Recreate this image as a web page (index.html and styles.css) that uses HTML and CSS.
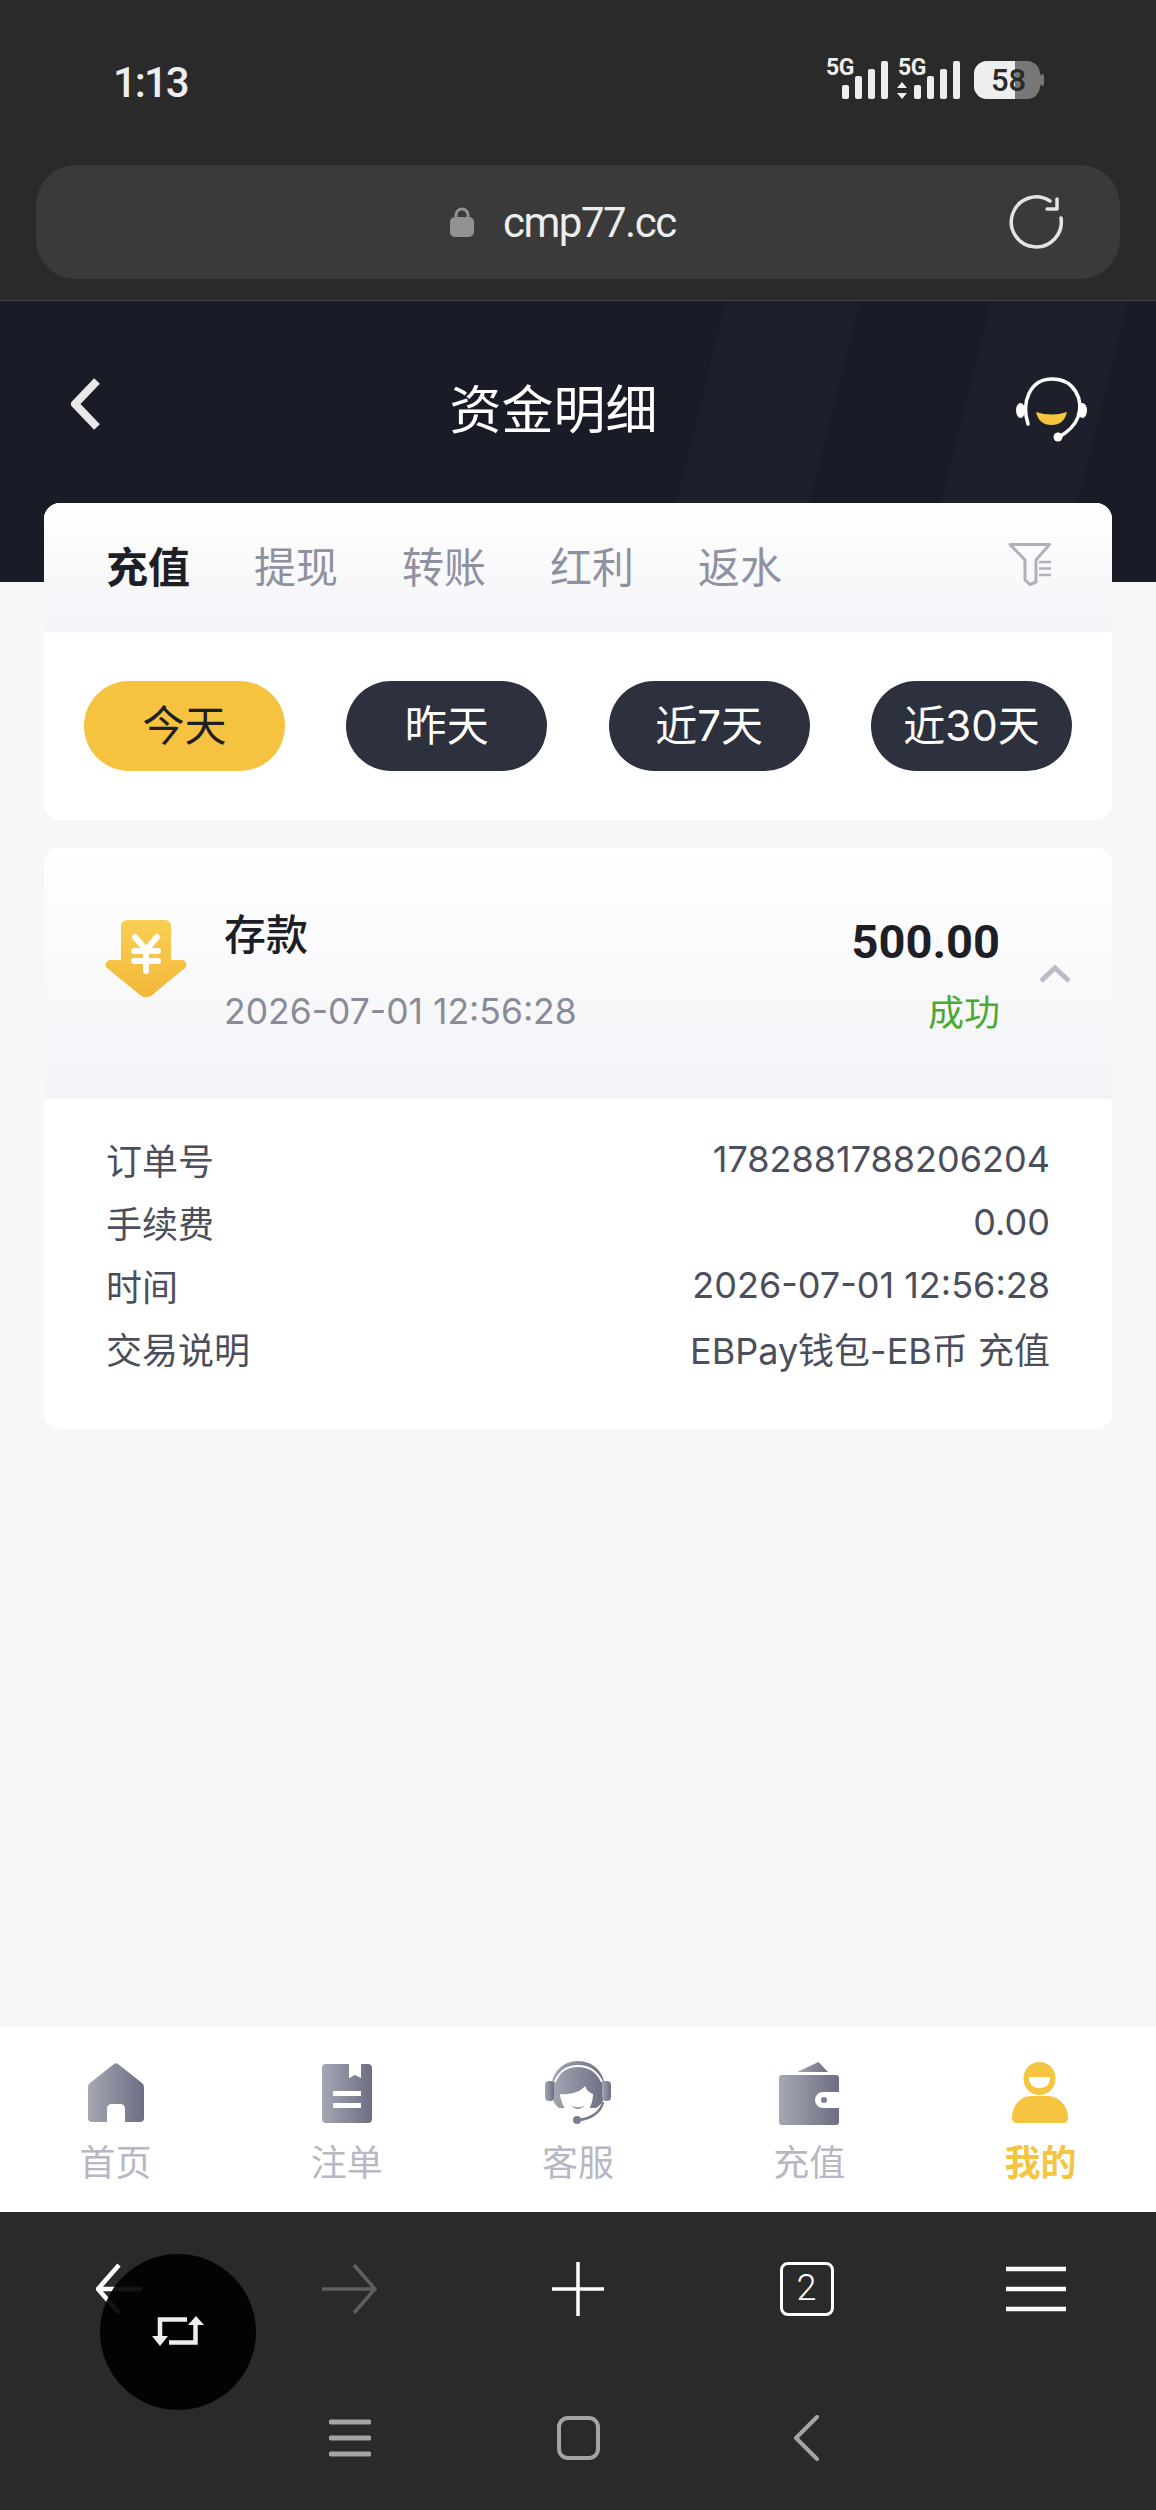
FILE: index.html
```html
<!DOCTYPE html>
<html>
<head>
  <meta charset="utf-8">
  <link rel="stylesheet" href="styles.css">
</head>
<body>
  <div class="browser-top">
    <div class="status-bar">
      <span class="status-time">1:13</span>
      <svg class="status-icons" width="232" height="50" viewBox="0 0 232 50">
        <text x="0" y="21" class="status-5g">5G</text>
        <rect x="16" y="31" width="7" height="14" rx="2" fill="#eee"/>
        <rect x="29" y="22" width="7" height="23" rx="2" fill="#eee"/>
        <rect x="42" y="15" width="7" height="30" rx="2" fill="#eee"/>
        <rect x="55" y="7" width="7" height="38" rx="2" fill="#eee"/>
        <text x="72" y="21" class="status-5g">5G</text>
        <path d="M76 28l5 6h-10zM76 45l5-6h-10z" fill="#eee"/>
        <rect x="88" y="31" width="7" height="14" rx="2" fill="#eee"/>
        <rect x="101" y="22" width="7" height="23" rx="2" fill="#eee"/>
        <rect x="114" y="15" width="7" height="30" rx="2" fill="#eee"/>
        <rect x="127" y="7" width="7" height="38" rx="2" fill="#eee"/>
        <rect x="148" y="7" width="66" height="38" rx="13" fill="#777"/>
        <path d="M161 7h28v38h-28a13 13 0 0 1-13-13v-12a13 13 0 0 1 13-13z" fill="#eee"/>
        <rect x="214" y="20" width="4" height="12" rx="2" fill="#777"/>
        <text x="182.500" y="37" class="status-battery">58</text>
      </svg>
    </div>
    <div class="url-bar">
      <svg class="url-lock" width="26" height="30" viewBox="0 0 26 30">
        <path d="M7 12V8a6 6 0 0 1 12 0v4" fill="none" stroke="#929292" stroke-width="3"/>
        <rect x="1" y="10" width="24" height="20" rx="5" fill="#929292"/>
      </svg>
      <span class="url-text">cmp77.cc</span>
      <svg class="url-reload" width="56" height="56" viewBox="0 0 56 56">
        <path d="M53 24A25 25 0 1 1 42 7" fill="none" stroke="#e4e4e4" stroke-width="3.500" stroke-linecap="round"/>
        <path d="M39 15H49V5" fill="none" stroke="#e4e4e4" stroke-width="3.500" stroke-linecap="round" stroke-linejoin="round"/>
      </svg>
    </div>
  </div>

  <div class="page-head">
    <svg class="head-back" width="34" height="54" viewBox="0 0 34 54">
      <path d="M29 4L7 27l22 23" fill="none" stroke="#e8e8e8" stroke-width="8" stroke-linejoin="round"/>
    </svg>
    <div class="head-title">资金明细</div>
    <svg class="head-service" width="72" height="66" viewBox="0 0 72 66">
      <path d="M12 47C5 25 14 2 36 2S68 22 62 40C59 48 52 55 43 60" fill="none" stroke="#fff" stroke-width="3.500" stroke-linecap="round"/>
      <ellipse cx="4.500" cy="33.500" rx="4.500" ry="7.500" fill="#fff"/>
      <ellipse cx="66.500" cy="33.500" rx="4.500" ry="7.500" fill="#fff"/>
      <circle cx="42" cy="60" r="4.500" fill="#fff"/>
      <path d="M20 35q15.500 5 31 0q-3 13-15.500 13T20 35z" fill="#f5c542"/>
    </svg>
  </div>

  <div class="content">
    <div class="card">
      <div class="tabs">
        <span class="tab tab-active">充值</span>
        <span class="tab">提现</span>
        <span class="tab">转账</span>
        <span class="tab">红利</span>
        <span class="tab">返水</span>
        <svg class="tab-filter" width="46" height="46" viewBox="0 0 46 46">
          <path d="M3 2.500H42.500L29 18V40L23 42.500 18 38V18z" fill="none" stroke="#aeb0bd" stroke-width="3" stroke-linejoin="round"/>
          <path d="M32 20H44M32 26.500H44M32 33H44" stroke="#aeb0bd" stroke-width="2.500"/>
        </svg>
      </div>
      <div class="pills">
        <span class="pill pill-active">今天</span>
        <span class="pill">昨天</span>
        <span class="pill">近7天</span>
        <span class="pill">近30天</span>
      </div>
    </div>

    <div class="card record">
      <div class="record-head">
        <svg class="record-icon" width="82" height="78" viewBox="0 0 82 78">
          <defs>
            <linearGradient id="arrowGrad" x1="0" y1="0" x2="0" y2="1">
              <stop offset="0" stop-color="#f8d052"/>
              <stop offset="1" stop-color="#f3b73a"/>
            </linearGradient>
          </defs>
          <path d="M22 0h38a6 6 0 0 1 6 6v34h10c5 0 7 5 4 8L47 75c-3 3-9 3-12 0L2 48c-3-3-1-8 4-8h10V6a6 6 0 0 1 6-6z" fill="url(#arrowGrad)"/>
          <path d="M30 17l11 13 11-13M29 31h24M29 41h24M41 30v21" fill="none" stroke="#fff" stroke-width="6" stroke-linecap="round" stroke-linejoin="round"/>
        </svg>
        <div class="record-main">
          <div class="record-title">存款</div>
          <div class="record-date">2026-07-01 12:56:28</div>
        </div>
        <div class="record-side">
          <div class="record-amount">500.00</div>
          <div class="record-state">成功</div>
        </div>
        <svg class="record-chevron" width="34" height="20" viewBox="0 0 34 20">
          <path d="M3 17L17 4l14 13" fill="none" stroke="#b9bbc9" stroke-width="5"/>
        </svg>
      </div>
      <div class="record-rows">
        <div class="record-row"><span>订单号</span><span>1782881788206204</span></div>
        <div class="record-row"><span>手续费</span><span>0.00</span></div>
        <div class="record-row"><span>时间</span><span>2026-07-01 12:56:28</span></div>
        <div class="record-row"><span>交易说明</span><span>EBPay钱包-EB币 充值</span></div>
      </div>
    </div>
  </div>

  <div class="tabbar">
    <div class="tabbar-item">
      <svg class="tabbar-icon" width="56" height="60" viewBox="0 0 56 60">
        <defs>
          <linearGradient id="navGrad" x1="0" y1="0" x2="1" y2="0">
            <stop offset="0" stop-color="#a5a7b3"/>
            <stop offset="1" stop-color="#6c6f83"/>
          </linearGradient>
        </defs>
        <path d="M26 1q2-1.500 4 0l24 19q2 1.500 2 4v31a4 4 0 0 1-4 4H37V46q0-5-5-5h-8q-5 0-5 5v13H4a4 4 0 0 1-4-4V24q0-2.500 2-4z" fill="url(#navGrad)"/>
      </svg>
      <span>首页</span>
    </div>
    <div class="tabbar-item">
      <svg class="tabbar-icon" width="50" height="60" viewBox="0 0 50 60">
        <path fill-rule="evenodd" d="M4 1h23v14l6-3 6 3V1h7a4 4 0 0 1 4 4v51a4 4 0 0 1-4 4H4a4 4 0 0 1-4-4V5a4 4 0 0 1 4-4zM11 28v5h28v-5zM11 40v5h28v-5z" fill="url(#navGrad)"/>
      </svg>
      <span>注单</span>
    </div>
    <div class="tabbar-item">
      <svg class="tabbar-icon" width="66" height="66" viewBox="0 0 66 66">
        <path d="M6 30C6 12 18 1 33 1s27 11 27 29c0 10-4 15-9 18L14 48c-5-4-8-10-8-18z" fill="url(#navGrad)"/>
        <path d="M10 22C14 11 23 6 33 6s19 5 24 16" fill="none" stroke="#fff" stroke-width="2"/>
        <rect x="0" y="21" width="9" height="20" rx="4" fill="url(#navGrad)"/>
        <rect x="57" y="21" width="9" height="20" rx="4" fill="url(#navGrad)"/>
        <path d="M15 34C22 35 35 33 40 26C42 31 45 33 48 34C48 45 42 56 33 56C24 56 16 46 15 34z" fill="#fff"/>
        <path d="M26 45q7 5 14 0q-7 8-14 0z" fill="#85879a"/>
        <path d="M58 42C56 52 46 59 33 60" fill="none" stroke="#7b7d90" stroke-width="2.500"/>
        <circle cx="32" cy="60" r="4" fill="#7b7d90"/>
      </svg>
      <span>客服</span>
    </div>
    <div class="tabbar-item">
      <svg class="tabbar-icon" width="60" height="64" viewBox="0 0 60 64">
        <path d="M18 11L39.500 1 49 11z" fill="url(#navGrad)"/>
        <path d="M3 14h54a3 3 0 0 1 3 3v14H44a8 8 0 0 0 0 16h16v14a3 3 0 0 1-3 3H3a3 3 0 0 1-3-3V17a3 3 0 0 1 3-3z" fill="url(#navGrad)"/>
        <circle cx="45" cy="39" r="3" fill="#7b7d90"/>
      </svg>
      <span>充值</span>
    </div>
    <div class="tabbar-item tabbar-active">
      <svg class="tabbar-icon" width="56" height="62" viewBox="0 0 56 62">
        <path fill-rule="evenodd" d="M27.500 0c9 0 16 7 16 16.500S36.500 33 27.500 33s-16-7-16-16.500S18.500 0 27.500 0zM17 15q0 11 10.500 11T38 15z" fill="#f5c542"/>
        <path d="M20 34h15c12 0 21 10 21 22q0 5-5 5H5q-5 0-5-5C0 44 8 34 20 34z" fill="#f5c542"/>
      </svg>
      <span>我的</span>
    </div>
  </div>

  <div class="browser-bottom">
    <div class="tool-row">
      <svg width="48" height="54" viewBox="0 0 48 54"><path d="M23 3L2 27l21 24M2 27h44" fill="none" stroke="#fff" stroke-width="4.500"/></svg>
      <svg width="56" height="54" viewBox="0 0 56 54"><path d="M33 3l21 24-21 24M1 27h53" fill="none" stroke="#5f5f5f" stroke-width="3.500"/></svg>
      <svg width="52" height="54" viewBox="0 0 52 54"><path d="M26 0v54M0 27h52" stroke="#fff" stroke-width="3.500"/></svg>
      <div class="tool-count">2</div>
      <svg width="60" height="46" viewBox="0 0 60 46"><path d="M0 3h60M0 23h60M0 43h60" stroke="#fff" stroke-width="4.500"/></svg>
    </div>
    <div class="sys-row">
      <svg width="42" height="40" viewBox="0 0 42 40"><path d="M2 4h38M2 20h38M2 36h38" stroke="#a4a4a4" stroke-width="5" stroke-linecap="round"/></svg>
      <div class="sys-home"></div>
      <svg width="28" height="46" viewBox="0 0 28 46"><path d="M25 2L4 23l21 21" fill="none" stroke="#a4a4a4" stroke-width="4" stroke-linecap="round" stroke-linejoin="round"/></svg>
    </div>
    <div class="float-btn">
      <svg width="52" height="32" viewBox="0 0 52 32">
        <path d="M8 21V3.500H35M17 26.500H43.500V8" fill="none" stroke="#eee" stroke-width="4.500"/>
        <path d="M0 20h16l-8 10zM36 9h16L44 0z" fill="#eee"/>
      </svg>
    </div>
  </div>
</body>
</html>
```

FILE: styles.css
```css
* {
  box-sizing: border-box;
}

body {
  margin: 0;
  width: 1156px;
  height: 2510px;
  display: flex;
  flex-direction: column;
  background-color: #f7f7f7;
  font-family: Inter, "Noto Sans CJK SC", sans-serif;
  overflow: hidden;
}

svg {
  display: block;
  flex-shrink: 0;
}

.browser-top {
  height: 301px;
  padding: 0 36px;
  background-color: #2a2a2a;
  border-bottom: 1px solid #414141;
}

.status-bar {
  height: 165px;
  padding-left: 77px;
  display: flex;
  justify-content: space-between;
  align-items: center;
}

.status-time {
  color: #eee;
  font-family: Roboto, sans-serif;
  font-size: 42px;
  font-weight: 500;
  letter-spacing: -2px;
}

.status-icons {
  margin-right: 62px;
  margin-top: -7px;
}

.status-5g {
  fill: #eee;
  font-family: Roboto, sans-serif;
  font-size: 23px;
  font-weight: 700;
  letter-spacing: -0.5px;
}

.status-battery {
  fill: #2a2a2a;
  font-family: Roboto, sans-serif;
  font-size: 31px;
  font-weight: 500;
  text-anchor: middle;
}

.url-bar {
  height: 114px;
  padding-left: 413px;
  padding-right: 56px;
  display: flex;
  align-items: center;
  background-color: #3a3a3a;
  border-radius: 40px;
}

.url-text {
  margin-left: 28px;
  color: #eee;
  font-family: Roboto, sans-serif;
  font-size: 42px;
  letter-spacing: -1.5px;
  flex: 1;
}

.page-head {
  height: 281px;
  padding: 76px 68px 0;
  display: flex;
  justify-content: space-between;
  align-items: flex-start;
  background-color: #191c26;
  background-image: linear-gradient(104deg, transparent 705px, #1d202a 705px, #1d202a 834px, transparent 834px, transparent 962px, #1d202a 962px, #1d202a 1094px, transparent 1094px);
}

.head-title {
  flex: 1;
  margin-top: 4px;
  margin-right: 11px;
  color: #fff;
  font-size: 52px;
  line-height: 60px;
  text-align: center;
}

.content {
  flex: 1;
  margin-top: -79px;
  padding: 0 44px;
}

.card {
  background-color: #fff;
  border-radius: 16px;
  overflow: hidden;
}

.tabs {
  height: 129px;
  padding: 0 62px;
  display: flex;
  align-items: center;
  gap: 64px;
  background: linear-gradient(#fff, #f3f4f8);
}

.tab {
  color: #8f919e;
  font-size: 42px;
  line-height: 131px;
}

.tab-active {
  color: #1d1e26;
  font-weight: 700;
}

.tab-filter {
  margin-left: auto;
  margin-right: -3px;
  margin-top: -5px;
}

.pills {
  height: 188px;
  padding: 49px 40px;
  display: flex;
  justify-content: space-between;
}

.pill {
  width: 201px;
  height: 90px;
  background-color: #2d303d;
  border-radius: 45px;
  color: #fff;
  font-size: 42px;
  line-height: 90px;
  text-align: center;
}

.pill-active {
  background-color: #f5c33f;
  color: #1d1e26;
}

.record {
  margin-top: 28px;
}

.record-head {
  height: 251px;
  padding: 0 40px 0 61px;
  display: flex;
  align-items: center;
  background: linear-gradient(#fff, #f3f4f8);
}

.record-icon {
  margin-top: -30px;
}

.record-main {
  flex: 1;
  margin-left: 37px;
}

.record-title {
  color: #1d1e26;
  font-size: 42px;
  font-weight: 500;
  line-height: 60px;
}

.record-date {
  margin-top: 17px;
  color: #8a8b97;
  font-size: 35.500px;
  line-height: 60px;
}

.record-side {
  margin-top: 8px;
  text-align: right;
}

.record-amount {
  color: #1d1e26;
  font-family: Roboto, sans-serif;
  font-size: 47px;
  font-weight: 700;
  line-height: 60px;
}

.record-state {
  margin-top: 11px;
  color: #4aaa2e;
  font-size: 36px;
  line-height: 60px;
}

.record-chevron {
  margin-left: 38px;
}

.record-rows {
  padding: 28px 62px 50px;
}

.record-row {
  height: 63px;
  display: flex;
  justify-content: space-between;
  align-items: center;
  color: #4c4e5c;
  font-size: 36px;
}

.tabbar {
  height: 185px;
  display: grid;
  grid-template-columns: repeat(5, 1fr);
  background-color: #fff;
}

.tabbar-item {
  height: 185px;
  padding-top: 33px;
  display: flex;
  flex-direction: column;
  align-items: center;
  color: #b7b8c3;
  font-size: 36px;
  line-height: 50px;
}

.tabbar-icon {
  height: 66px;
  margin-bottom: 12px;
}

.tabbar-active {
  color: #f5c542;
  font-weight: 700;
}

.browser-bottom {
  height: 298px;
  position: relative;
  background-color: #2a2a2a;
}

.tool-row {
  height: 154px;
  padding-left: 5px;
  display: grid;
  grid-template-columns: repeat(5, 229px);
  justify-items: center;
  align-items: center;
}

.tool-count {
  width: 54px;
  height: 54px;
  border: 3.500px solid #fff;
  border-radius: 8px;
  color: #fff;
  font-family: Roboto, sans-serif;
  font-size: 36px;
  font-weight: 300;
  line-height: 46px;
  text-align: center;
}

.sys-row {
  height: 144px;
  padding-left: 236px;
  display: grid;
  grid-template-columns: repeat(3, 228px);
  justify-items: center;
  align-items: center;
}

.sys-home {
  width: 43px;
  height: 44px;
  border: 4.500px solid #a4a4a4;
  border-radius: 11px;
}

.float-btn {
  position: absolute;
  left: 100px;
  top: 42px;
  width: 156px;
  height: 156px;
  display: flex;
  justify-content: center;
  align-items: center;
  background-color: rgba(0, 0, 0, 0.92);
  border-radius: 50%;
}
```
